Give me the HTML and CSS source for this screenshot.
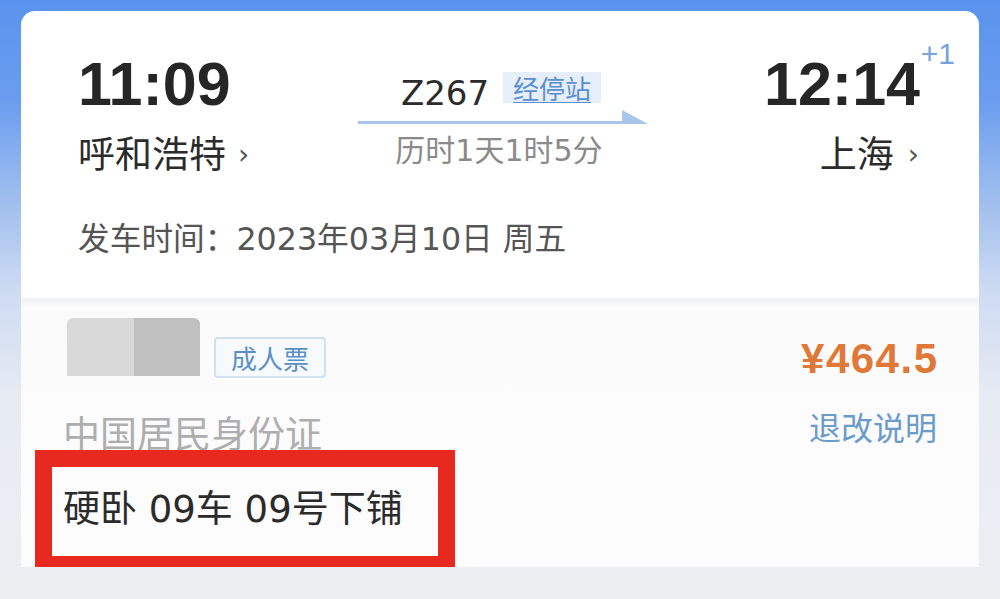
FILE: index.html
```html
<!DOCTYPE html>
<html lang="zh-CN">
<head>
    <meta charset="UTF-8">
    <meta name="viewport" content="width=device-width, initial-scale=1.0">
    <title>订单详情</title>
    <link rel="stylesheet" href="styles.css">
</head>
<body>

    <div class="ticket">
        <section class="trip">
            <div class="times">
                <div class="end">
                    <div class="time">11:09</div>
                    <div class="city">呼和浩特<span class="chev">›</span></div>
                </div>

                <div class="train">
                    <div class="train-head">
                        <span class="train-no">Z267</span>
                        <a class="stops" href="#">经停站</a>
                    </div>
                    <svg class="arrow" width="290" height="16" viewBox="0 0 290 16">
                        <rect x="0" y="11" width="270" height="3" fill="#a9c5ea"/>
                        <polygon points="264,0 290,14 264,14" fill="#a9c5ea"/>
                    </svg>
                    <div class="duration">历时1天1时5分</div>
                </div>

                <div class="end arrive">
                    <div class="time">12:14<span class="plus">+1</span></div>
                    <div class="city">上海<span class="chev">›</span></div>
                </div>
            </div>
            <div class="depart">发车时间：2023年03月10日 周五</div>
        </section>

        <section class="passenger">
            <div class="row">
                <div class="who">
                    <div class="name-blur"><span></span><span></span></div>
                    <span class="tag">成人票</span>
                </div>
                <div class="price">¥464.5</div>
            </div>
            <div class="row second">
                <div class="id-type">中国居民身份证</div>
                <a class="refund" href="#">退改说明</a>
            </div>
            <div class="seat">硬卧 09车 09号下铺</div>

            <!-- annotation frame drawn over the seat line -->
            <div class="mark"></div>
        </section>
    </div>

</body>
</html>
```

FILE: styles.css
```css
body {
    margin: 0;
    padding: 11px 21px 0;
    height: 588px;
    overflow: hidden;
    font-family: "Noto Sans CJK SC", sans-serif;
    color: #2b2b2b;
    background: linear-gradient(180deg, #5a93ee 0, #6a9def 100px, #9fbeee 200px, #cddbf2 290px, #e7ebf3 400px, #eceef2 599px);
}
a {
    text-decoration: none;
}
.ticket {
    width: 958px;
    border-radius: 14px 14px 0 0;
    overflow: hidden;
}

/* upper part: times and stations */
.trip {
    background-color: #fff;
    padding: 43px 59px 39px 57px;
}
.times {
    display: grid;
    grid-template-columns: 1fr 290px 1fr;
    align-items: start;
}
.time {
    position: relative;
    font-family: "Liberation Sans", sans-serif;
    font-weight: bold;
    font-size: 61px;
    line-height: 61px;
    color: #262626;
}
.arrive {
    text-align: right;
}
.plus {
    position: absolute;
    right: -35px;
    top: -15px;
    font-weight: normal;
    font-size: 30px;
    line-height: 30px;
    color: #7aa3de;
}
.city {
    margin-top: 15px;
    font-size: 37px;
    line-height: 44px;
    color: #2b2b2b;
}
.chev {
    display: inline-block;
    margin-left: 12px;
    font-family: "DejaVu Sans", sans-serif;
    font-size: 28px;
    color: #555;
    vertical-align: 4px;
}
.arrive .chev {
    margin-left: 14px;
    margin-right: 1px;
}
.train {
    padding-top: 18px;
    text-align: center;
}
.train-head {
    display: flex;
    justify-content: center;
    align-items: flex-start;
    gap: 14px;
    padding-left: 4px;
}
.train-no {
    margin-top: 5px;
    font-family: "DejaVu Sans", sans-serif;
    font-size: 34px;
    line-height: 32px;
    color: #2b2b2b;
}
.stops {
    padding: 0 10px;
    height: 31px;
    font-size: 26px;
    line-height: 31px;
    color: #5b8fd2;
    background-color: #e5eef9;
    text-decoration: underline;
    text-underline-offset: 3px;
    text-decoration-thickness: 1px;
}
.arrow {
    display: block;
    margin: 1px 0 0 4px;
}
.duration {
    margin-top: 7px;
    font-family: "DejaVu Sans", "Noto Sans CJK SC", sans-serif;
    font-size: 30px;
    line-height: 36px;
    color: #8a8a8a;
}
.depart {
    margin-top: 42px;
    font-family: "DejaVu Sans", "Noto Sans CJK SC", sans-serif;
    font-size: 31.7px;
    line-height: 40px;
    color: #555;
}

/* lower part: passenger */
.passenger {
    position: relative;
    height: 249px;
    padding: 20px 42px 0 42px;
    background: linear-gradient(180deg, #f0f1f3 0, #fbfbfc 8px, #fcfcfd 100%);
}
.row {
    display: flex;
    justify-content: space-between;
    align-items: flex-start;
}
.who {
    display: flex;
    align-items: flex-start;
}
.name-blur {
    display: flex;
    margin-left: 4px;
    border-radius: 6px 6px 0 0;
    overflow: hidden;
    filter: blur(0.6px);
}
.name-blur span {
    width: 67px;
    height: 58px;
    background-color: #d9d9d9;
}
.name-blur span + span {
    width: 66px;
    background-color: #c1c1c1;
}
.tag {
    margin: 19px 0 0 14px;
    padding: 0 15px;
    height: 37px;
    font-size: 26px;
    line-height: 37px;
    color: #5b8fc4;
    background-color: #f7fafd;
    border: 2px solid #d3e0ee;
    border-radius: 4px;
}
.price {
    margin-top: 20px;
    font-family: "Liberation Sans", sans-serif;
    font-weight: bold;
    font-size: 42px;
    line-height: 42px;
    letter-spacing: 1.5px;
    margin-right: -1.5px;
    color: #e07838;
}
.second {
    margin-top: 24px;
}
.id-type {
    margin-top: 6px;
    font-size: 37px;
    line-height: 44px;
    color: #aeaeae;
}
.refund {
    font-size: 32px;
    line-height: 44px;
    color: #6b9bcb;
}
.seat {
    margin-top: 34px;
    font-family: "DejaVu Sans", "Noto Sans CJK SC", sans-serif;
    font-size: 37px;
    line-height: 44px;
    color: #2b2b2b;
}
.mark {
    position: absolute;
    left: 14px;
    top: 152px;
    width: 386px;
    height: 89px;
    border: 17px solid #e8291f;
}
```
